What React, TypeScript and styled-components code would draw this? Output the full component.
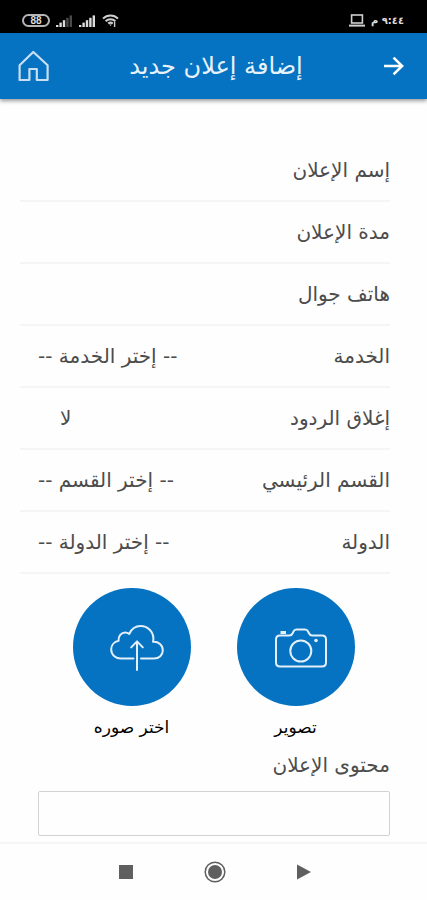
import React, { useId } from "react";
import styled, { createGlobalStyle } from "styled-components";

const BLUE = "#0573c1";

const GlobalStyle = createGlobalStyle`
  *, *::before, *::after { box-sizing: border-box; }
  body { margin: 0; background: #fefefe; }
  body, input, select, textarea, button {
    font-family: "DejaVu Sans", "Noto Sans", sans-serif;
  }
`;

const Screen = styled.div`
  display: flex;
  flex-direction: column;
  min-height: 100vh;
  background: #fefefe;
`;

const StatusBar = styled.div`
  display: flex;
  direction: ltr;
  align-items: center;
  justify-content: space-between;
  height: 33px;
  padding: 8px 23px 0 22px;
  background: #000;
  color: #dcdcdc;
`;

const StatusGroup = styled.div`
  display: flex;
  align-items: center;
  gap: 6px;
`;

const Battery = styled.span`
  display: flex;
  align-items: center;
  justify-content: center;
  width: 28px;
  height: 13px;
  border: 2px solid #b5b5b5;
  border-radius: 7px;
  font-family: "Liberation Sans", sans-serif;
  font-size: 10px;
  font-weight: 700;
  line-height: 10px;
`;

const Clock = styled.span`
  font-size: 10px;
  font-weight: 700;
  line-height: 16px;
`;

const Header = styled.header`
  display: flex;
  align-items: center;
  justify-content: space-between;
  height: 66px;
  padding: 0 22px 0 17px;
  background: ${BLUE};
  color: #e8f2fb;
  box-shadow: 0 2px 4px rgba(0, 0, 0, 0.4);
`;

const Title = styled.h1`
  margin: 0;
  font-size: 24px;
  font-weight: 400;
  line-height: 32px;
`;

const IconButton = styled.button`
  display: flex;
  align-items: center;
  justify-content: center;
  padding: 0;
  border: 0;
  background: none;
  color: inherit;
  cursor: pointer;
`;

const Form = styled.form`
  flex: 1;
  padding: 41px 37px 6px 20px;
  color: #4c4c4c;
`;

const Row = styled.div`
  display: flex;
  align-items: center;
  justify-content: space-between;
  gap: 16px;
  height: 62px;
  border-bottom: 2px solid #f5f5f5;
`;

const Label = styled.label`
  font-size: 20px;
  line-height: 28px;
  white-space: nowrap;
`;

const TextInput = styled.input`
  flex: 1;
  min-width: 0;
  height: 40px;
  padding: 0 18px;
  border: 0;
  background: transparent;
  color: inherit;
  font-size: 20px;
`;

const Select = styled.select<{ $inset: number }>`
  appearance: none;
  flex: 1;
  min-width: 0;
  height: 40px;
  padding: 0 0 0 ${(p) => p.$inset}px;
  border: 0;
  background: transparent;
  color: inherit;
  font-size: 20px;
  text-align: left;
`;

const Uploads = styled.div`
  display: flex;
  justify-content: center;
  gap: 46px;
  padding: 14px 0 0 17px;
`;

const UploadButton = styled.button`
  display: flex;
  flex-direction: column;
  align-items: center;
  gap: 7px;
  padding: 0;
  border: 0;
  background: none;
  color: #000;
  font-size: 17px;
  line-height: 28px;
  cursor: pointer;
`;

const Disc = styled.span`
  display: flex;
  align-items: center;
  justify-content: center;
  width: 118px;
  height: 118px;
  padding: 2px 0 0 10px;
  border-radius: 50%;
  background: ${BLUE};
  color: #e3effa;
`;

const ContentField = styled.div`
  display: flex;
  flex-direction: column;
  gap: 12px;
  padding: 10px 0 0 18px;
`;

const ContentArea = styled.textarea`
  width: 100%;
  height: 45px;
  padding: 8px;
  border: 1px solid #d2d2d5;
  border-radius: 2px;
  background: #fefefe;
  color: inherit;
  font-size: 20px;
  resize: none;
`;

const NavBar = styled.nav`
  display: flex;
  direction: ltr;
  align-items: center;
  justify-content: center;
  gap: 67px;
  height: 58px;
  padding-left: 3px;
  border-top: 2px solid #f5f5f5;
  color: #5f5f5f;
`;

function Signal({ level }: { level: number }) {
  return (
    <svg width="17" height="12" viewBox="0 0 17 12" aria-hidden="true">
      {[0, 1, 2, 3, 4].map((i) => (
        <rect
          key={i}
          x={i * 3.4}
          y={10 - i * 2.4}
          width="2.4"
          height={2 + i * 2.4}
          fill={i < level ? "#dcdcdc" : "#4a4a4a"}
        />
      ))}
    </svg>
  );
}

function WifiIcon() {
  return (
    <svg width="17" height="13" viewBox="0 0 17 13" fill="none" stroke="#cfcfcf" strokeWidth="2" aria-hidden="true">
      <path d="M1 4.6C5.2.4 11.8.4 16 4.6" />
      <path d="M3.6 7.2c2.8-2.7 7-2.7 9.8 0" />
      <path d="M6.2 9.6c1.4-1.2 3.2-1.2 4.6 0" />
      <path d="M7.2 10.6h2.6L8.5 12z" fill="#cfcfcf" stroke="none" />
      <path d="M12.6 8v5" strokeWidth="1.4" />
    </svg>
  );
}

function LaptopIcon() {
  return (
    <svg width="16" height="13" viewBox="0 0 16 13" fill="none" stroke="#d0d0d0" aria-hidden="true">
      <rect x="2.6" y="1" width="10.8" height="8" strokeWidth="1.6" />
      <path d="M0 11.6h16" strokeWidth="2" />
    </svg>
  );
}

function ArrowIcon() {
  return (
    <svg width="22" height="22" viewBox="0 0 22 22" fill="none" stroke="#fff" strokeWidth="2.6" aria-hidden="true">
      <path d="M1 11h18M10.500 2.600l8.600 8.400-8.600 8.400" />
    </svg>
  );
}

function HomeIcon() {
  return (
    <svg width="32" height="32" viewBox="0 0 32 32" fill="none" stroke="#c9def3" strokeWidth="2.2" strokeLinejoin="round" aria-hidden="true">
      <path d="M16.3 2 2.6 15.3V30h9.8V19h7.4v11h10.8V15.3z" />
    </svg>
  );
}

function CameraIcon() {
  return (
    <svg width="52" height="40" viewBox="0 0 52 40" fill="none" stroke="currentColor" strokeWidth="2" strokeLinejoin="round" aria-hidden="true">
      <path d="M5 7.5h9.5c1.4 0 2.4-.8 3-2l1-2c.6-1.4 1.5-2 3-2h8.5c1.5 0 2.4.6 3.1 2l1 2c.6 1.2 1.6 2 3 2H47c2.5 0 4 1.5 4 4v23c0 2.5-1.5 4-4 4H5c-2.500 0-4-1.500-4-4v-23c0-2.500 1.500-4 4-4z" />
      <path d="M5.500 4.500h5.500" strokeWidth="3" />
      <circle cx="25.8" cy="23" r="10.5" />
      <circle cx="41" cy="12.5" r="1.8" fill="currentColor" stroke="none" />
    </svg>
  );
}

function CloudIcon() {
  return (
    <svg width="54" height="46" viewBox="0 0 54 46" fill="none" stroke="currentColor" strokeWidth="2" strokeLinecap="round" strokeLinejoin="round" aria-hidden="true">
      <path d="M23.5 33.5H11C5.4 33.5 1.2 29.6 1.2 24.6c0-4.4 3-8 7.400-8.800-.6-4.800 2.800-8.200 6.600-8.200 1.600 0 2.800.5 4 1.400C21.300 4.200 25.600 1 30.600 1c7.200 0 12.800 5.600 12.800 12.600 0 1.100-.1 2.100-.4 3.200 5.600-.4 9.800 3.400 9.800 8.400 0 4.800-3.700 8.300-8.800 8.300H31" />
      <path d="M27 45V16.800M21.200 22.400l5.800-6 5.800 6" />
    </svg>
  );
}

function TextRow({ label, type = "text" }: { label: string; type?: string }) {
  const id = useId();
  return (
    <Row>
      <Label htmlFor={id}>{label}</Label>
      <TextInput id={id} type={type} />
    </Row>
  );
}

function SelectRow({ label, value, inset = 18 }: { label: string; value: string; inset?: number }) {
  const id = useId();
  return (
    <Row>
      <Label htmlFor={id}>{label}</Label>
      <Select id={id} $inset={inset} defaultValue={value}>
        <option>{value}</option>
      </Select>
    </Row>
  );
}

export default function App() {
  return (
    <Screen dir="rtl" lang="ar">
      <GlobalStyle />
      <StatusBar>
        <StatusGroup>
          <Battery>88</Battery>
          <Signal level={3} />
          <Signal level={5} />
          <WifiIcon />
        </StatusGroup>
        <StatusGroup>
          <LaptopIcon />
          <Clock dir="rtl">٩:٤٤ م</Clock>
        </StatusGroup>
      </StatusBar>
      <Header dir="ltr">
        <IconButton type="button" aria-label="الرئيسية">
          <HomeIcon />
        </IconButton>
        <Title dir="rtl">إضافة إعلان جديد</Title>
        <IconButton type="button" aria-label="رجوع">
          <ArrowIcon />
        </IconButton>
      </Header>
      <Form>
        <TextRow label="إسم الإعلان" />
        <TextRow label="مدة الإعلان" />
        <TextRow label="هاتف جوال" type="tel" />
        <SelectRow label="الخدمة" value="-- إختر الخدمة --" />
        <SelectRow label="إغلاق الردود" value="لا" inset={40} />
        <SelectRow label="القسم الرئيسي" value="-- إختر القسم --" />
        <SelectRow label="الدولة" value="-- إختر الدولة --" />
        <Uploads>
          <UploadButton type="button">
            <Disc>
              <CameraIcon />
            </Disc>
            تصوير
          </UploadButton>
          <UploadButton type="button">
            <Disc>
              <CloudIcon />
            </Disc>
            اختر صوره
          </UploadButton>
        </Uploads>
        <ContentField>
          <Label htmlFor="ad-content">محتوى الإعلان</Label>
          <ContentArea id="ad-content" rows={1} />
        </ContentField>
      </Form>
      <NavBar>
        <IconButton type="button" aria-label="التطبيقات الأخيرة">
          <svg width="22" height="22" viewBox="0 0 22 22" aria-hidden="true">
            <rect x="4" y="4" width="14" height="14" fill="currentColor" />
          </svg>
        </IconButton>
        <IconButton type="button" aria-label="الشاشة الرئيسية">
          <svg width="22" height="22" viewBox="0 0 22 22" aria-hidden="true">
            <circle cx="11" cy="11" r="9.8" fill="none" stroke="currentColor" strokeWidth="1.5" />
            <circle cx="11" cy="11" r="7" fill="currentColor" />
          </svg>
        </IconButton>
        <IconButton type="button" aria-label="السابق">
          <svg width="22" height="22" viewBox="0 0 22 22" aria-hidden="true">
            <path d="M4 3.5 18 11 4 18.5z" fill="currentColor" />
          </svg>
        </IconButton>
      </NavBar>
    </Screen>
  );
}
